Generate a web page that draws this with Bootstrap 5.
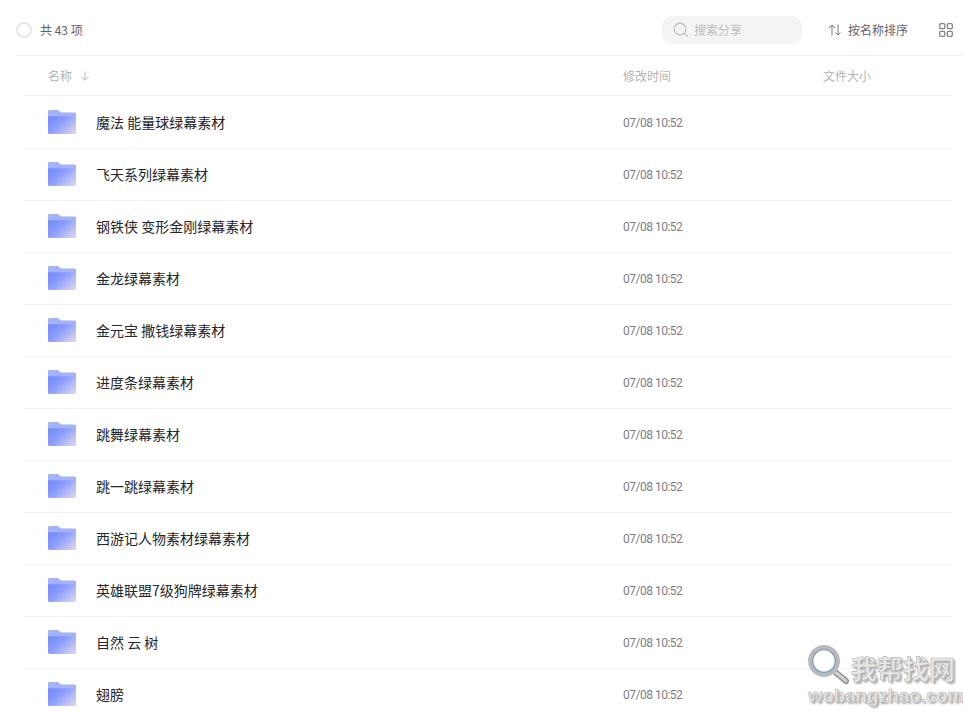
<!DOCTYPE html>
<html lang="zh">
<head>
<meta charset="utf-8">
<title>文件列表</title>
<link href="https://cdn.jsdelivr.net/npm/bootstrap@5.3.0/dist/css/bootstrap.min.css" rel="stylesheet">
<style>
html,body{height:715px;overflow:hidden;background:#fff}
body{font-family:"Noto Sans CJK SC","Noto Sans",sans-serif;color:#25262b;position:relative}
.topbar{height:56px;margin-left:16px;border-bottom:1px solid #f0f0f0;padding-right:10px;padding-top:4px}
.check-ring{width:16px;height:16px;border:2px solid #e6e6e6;border-radius:50%}
.count-text{font-size:12px;color:#60626a;margin-left:8px;line-height:18px}
.search-box{width:140px;height:28px;background:#f4f4f4;border-radius:10px;padding-left:11px;color:#bdbdbd;font-size:12px;margin-right:26px;gap:5px}
.sort-btn{font-size:12px;color:#60626a;gap:6px;margin-right:31px}
.head-row,.file-row{margin-left:24px;margin-right:11px;border-bottom:1px solid #f2f2f2;padding-left:24px}
.head-row{height:40px;font-size:12px;color:#b3b3b6}
.file-row{height:52px}
.file-row:first-of-type{height:53px}
.file-row svg{margin-bottom:1px}
.file-row:first-of-type svg{margin-bottom:0}
.c-name{width:575px;flex:none}
.c-date{width:200px;flex:none}
.file-name{font-size:14px;margin-left:20px;color:#25262b}
.file-date{font-size:12px;line-height:16px;padding-top:1px;color:#7d7e84;font-family:Roboto,"Noto Sans",sans-serif;letter-spacing:-.5px}
.mark-over{position:absolute;left:808px;top:645px;width:155px;height:66px;pointer-events:none}
.mark-cn{position:absolute;left:43px;top:4px;font-size:26px;line-height:38px;color:#e8e8e8;font-weight:700;-webkit-text-stroke:.6px #b4b4b4;text-shadow:2px 2px 2px #aaa;white-space:nowrap}
.mark-en{position:absolute;left:0;top:39px;font-family:"Liberation Sans",sans-serif;font-size:18.6px;line-height:24px;color:#e8e8e8;font-weight:700;-webkit-text-stroke:.5px #b0b0b0;text-shadow:2px 2px 2px #aaa;white-space:nowrap}
</style>
</head>
<body>
<svg width="0" height="0" class="d-block" aria-hidden="true"><defs>
<linearGradient id="fg" x1="0" y1="0" x2="1" y2=".7"><stop offset="0" stop-color="#7388fb"/><stop offset=".45" stop-color="#8a9bfb"/><stop offset="1" stop-color="#cfcff0"/></linearGradient>
<symbol id="folder" viewBox="0 0 28 24"><path d="M1.500 0H10l3 2.600H26.500A1.500 1.500 0 0 1 28 4.100V8H0V1.500A1.500 1.500 0 0 1 1.500 0Z" fill="#a3b2fd"/><path d="M0 6.200H28V22.500A1.500 1.500 0 0 1 26.500 24H1.500A1.500 1.500 0 0 1 0 22.500Z" fill="url(#fg)"/></symbol>
</defs></svg>

<div class="topbar d-flex align-items-center">
  <span class="check-ring"></span><span class="count-text">共 43 项</span>
  <div class="search-box d-flex align-items-center ms-auto">
    <svg width="16" height="16" viewBox="0 0 16 16" fill="none" stroke="#bdbdbd" stroke-width="1.200"><circle cx="7" cy="7" r="5.800"/><path d="M11.200 11.200 14.500 14.500"/></svg>
    <span>搜索分享</span>
  </div>
  <div class="sort-btn d-flex align-items-center">
    <svg width="14" height="12" viewBox="0 0 14 12" fill="none" stroke="#7a7b80" stroke-width="1"><path d="M4 11.500V1M1 4 4 1l3 3M10 .5V11M7.500 8.500 10 11l2.500-2.500"/></svg>
    <span>按名称排序</span>
  </div>
  <svg width="14" height="14" viewBox="0 0 14 14" fill="none" stroke="#85868a" stroke-width="1.300"><rect x=".7" y=".7" width="5" height="5" rx="1"/><rect x="8.300" y=".7" width="5" height="5" rx="1"/><rect x=".7" y="8.300" width="5" height="5" rx="1"/><rect x="8.300" y="8.300" width="5" height="5" rx="1"/></svg>
</div>

<div class="head-row d-flex align-items-center">
  <div class="c-name d-flex align-items-center gap-2"><span>名称</span>
    <svg width="10" height="10" viewBox="0 0 10 10" fill="none" stroke="#bbb" stroke-width="1"><path d="M5 .5V9.300M1.200 5.500 5 9.300l3.800-3.800"/></svg></div>
  <div class="c-date">修改时间</div>
  <div>文件大小</div>
</div>

<div>
<div class="file-row d-flex align-items-center"><div class="c-name d-flex align-items-center"><svg width="28" height="24"><use href="#folder"/></svg><span class="file-name">魔法 能量球绿幕素材</span></div><div class="file-date">07/08 10:52</div></div>
<div class="file-row d-flex align-items-center"><div class="c-name d-flex align-items-center"><svg width="28" height="24"><use href="#folder"/></svg><span class="file-name">飞天系列绿幕素材</span></div><div class="file-date">07/08 10:52</div></div>
<div class="file-row d-flex align-items-center"><div class="c-name d-flex align-items-center"><svg width="28" height="24"><use href="#folder"/></svg><span class="file-name">钢铁侠 变形金刚绿幕素材</span></div><div class="file-date">07/08 10:52</div></div>
<div class="file-row d-flex align-items-center"><div class="c-name d-flex align-items-center"><svg width="28" height="24"><use href="#folder"/></svg><span class="file-name">金龙绿幕素材</span></div><div class="file-date">07/08 10:52</div></div>
<div class="file-row d-flex align-items-center"><div class="c-name d-flex align-items-center"><svg width="28" height="24"><use href="#folder"/></svg><span class="file-name">金元宝 撒钱绿幕素材</span></div><div class="file-date">07/08 10:52</div></div>
<div class="file-row d-flex align-items-center"><div class="c-name d-flex align-items-center"><svg width="28" height="24"><use href="#folder"/></svg><span class="file-name">进度条绿幕素材</span></div><div class="file-date">07/08 10:52</div></div>
<div class="file-row d-flex align-items-center"><div class="c-name d-flex align-items-center"><svg width="28" height="24"><use href="#folder"/></svg><span class="file-name">跳舞绿幕素材</span></div><div class="file-date">07/08 10:52</div></div>
<div class="file-row d-flex align-items-center"><div class="c-name d-flex align-items-center"><svg width="28" height="24"><use href="#folder"/></svg><span class="file-name">跳一跳绿幕素材</span></div><div class="file-date">07/08 10:52</div></div>
<div class="file-row d-flex align-items-center"><div class="c-name d-flex align-items-center"><svg width="28" height="24"><use href="#folder"/></svg><span class="file-name">西游记人物素材绿幕素材</span></div><div class="file-date">07/08 10:52</div></div>
<div class="file-row d-flex align-items-center"><div class="c-name d-flex align-items-center"><svg width="28" height="24"><use href="#folder"/></svg><span class="file-name">英雄联盟7级狗牌绿幕素材</span></div><div class="file-date">07/08 10:52</div></div>
<div class="file-row d-flex align-items-center"><div class="c-name d-flex align-items-center"><svg width="28" height="24"><use href="#folder"/></svg><span class="file-name">自然 云 树</span></div><div class="file-date">07/08 10:52</div></div>
<div class="file-row d-flex align-items-center"><div class="c-name d-flex align-items-center"><svg width="28" height="24"><use href="#folder"/></svg><span class="file-name">翅膀</span></div><div class="file-date">07/08 10:52</div></div>
</div>

<div class="mark-over">
  <svg width="44" height="42" viewBox="0 0 44 42" class="d-block" fill="none">
    <path d="M26 26 38 36" stroke="#8c8c8c" stroke-width="6" stroke-linecap="round"/>
    <path d="M26 26 38 36" stroke="#d2d2d2" stroke-width="3" stroke-linecap="round"/>
    <circle cx="16" cy="16" r="13.500" fill="#fff" stroke="#bababa" stroke-width="5"/>
    <circle cx="16" cy="16" r="11.300" stroke="#7f9fc9" stroke-width="1.300"/>
  </svg>
  <span class="mark-cn">我帮找网</span>
  <span class="mark-en">wobangzhao.com</span>
</div>
</body>
</html>
